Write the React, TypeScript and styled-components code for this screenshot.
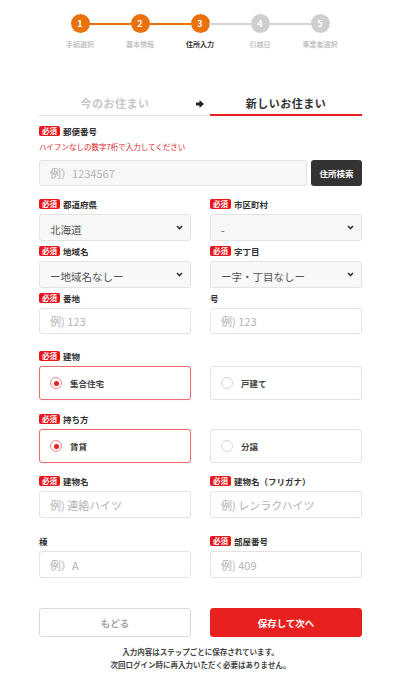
import React from 'react';
import styled, { createGlobalStyle } from 'styled-components';

const GlobalStyle = createGlobalStyle`
  * { box-sizing: border-box; }
  body {
    margin: 0;
    background: #fff;
    color: #333;
    font-family: "Noto Sans CJK JP", "Noto Sans", sans-serif;
  }
`;

const Page = styled.div`
  width: 400px;
  padding-bottom: 20px;
`;

const Stepper = styled.ol`
  display: flex;
  justify-content: center;
  list-style: none;
  margin: 0;
  padding: 14px 0 0;
`;

const Step = styled.li<{ $line?: 'on' | 'off' }>`
  position: relative;
  width: 60px;
  display: flex;
  flex-direction: column;
  align-items: center;

  &::after {
    content: '';
    display: ${(p) => (p.$line ? 'block' : 'none')};
    position: absolute;
    top: 9px;
    left: 39px;
    width: 42px;
    height: 2px;
    background: ${(p) => (p.$line === 'on' ? '#e8720c' : '#d4d4d4')};
  }
`;

const Circle = styled.span<{ $done: boolean }>`
  width: 19px;
  height: 19px;
  border-radius: 50%;
  background: ${(p) => (p.$done ? '#e8720c' : '#cfcfcf')};
  color: #fff;
  font-size: 9px;
  font-weight: 700;
  display: flex;
  align-items: center;
  justify-content: center;
`;

const StepLabel = styled.span<{ $current: boolean }>`
  margin-top: 6px;
  font-size: 7px;
  line-height: 10px;
  font-weight: 700;
  color: ${(p) => (p.$current ? '#333' : '#c4c4c4')};
  white-space: nowrap;
`;

const Content = styled.div`
  padding: 0 38px 0 39px;
`;

const Tabs = styled.div`
  margin-top: 43px;
  display: grid;
  grid-template-columns: 152px 19px 152px;
  border-bottom: 1px solid #e2e2e2;
`;

const Tab = styled.div<{ $active: boolean }>`
  height: 24px;
  display: flex;
  align-items: center;
  justify-content: center;
  font-size: 11px;
  font-weight: 700;
  letter-spacing: 0.5px;
  color: ${(p) => (p.$active ? '#333' : '#c8c8c8')};
  border-bottom: 2px solid ${(p) => (p.$active ? '#e8201f' : 'transparent')};
  margin-bottom: -1px;
`;

const TabArrow = styled.div`
  display: flex;
  align-items: center;
  justify-content: center;
  padding-right: 2px;
`;

const Section = styled.div<{ $mt: number }>`
  margin-top: ${(p) => p.$mt}px;
`;

const LabelRow = styled.div`
  height: 12px;
  display: flex;
  align-items: center;
  gap: 3px;
  font-size: 8.5px;
  font-weight: 700;
  color: #333;
`;

const Badge = styled.span`
  height: 10px;
  padding: 0 3px;
  border-radius: 2px;
  background: #e8141b;
  color: #fff;
  font-size: 7.5px;
  line-height: 10px;
  font-weight: 700;
`;

const Hint = styled.p`
  margin: 5px 0 0;
  font-size: 7.5px;
  line-height: 10px;
  color: #d9231f;
`;

const PostalRow = styled.div`
  margin-top: 8px;
  display: flex;
  gap: 4px;
`;

const TextInput = styled.input<{ $h?: number; $gray?: boolean }>`
  width: 100%;
  height: ${(p) => p.$h ?? 27}px;
  border: 1px solid #e3e3e3;
  border-radius: 3px;
  background: ${(p) => (p.$gray ? '#f7f7f7' : '#fff')};
  padding: 0 10px;
  font-family: inherit;
  font-size: 11px;
  color: #333;
  outline: none;

  &::placeholder {
    color: #b3b3b3;
  }
`;

const SearchButton = styled.button`
  flex: 0 0 51px;
  height: 26px;
  border: none;
  border-radius: 3px;
  background: #333;
  color: #fff;
  font-family: inherit;
  font-size: 8.5px;
  font-weight: 700;
`;

const Grid = styled.div<{ $mt: number }>`
  margin-top: ${(p) => p.$mt}px;
  display: grid;
  grid-template-columns: 152px 152px;
  column-gap: 19px;
`;

const Field = styled.div`
  display: flex;
  flex-direction: column;
  gap: 4px;
`;

const SelectWrap = styled.div`
  position: relative;
  height: 27px;
`;

const Select = styled.select`
  width: 100%;
  height: 100%;
  appearance: none;
  border: 1px solid #e3e3e3;
  border-radius: 3px;
  background: #f8f8f8;
  padding: 3px 10px 0;
  font-family: inherit;
  font-size: 10.5px;
  color: #555;
  outline: none;
`;

const Chevron = styled.svg`
  position: absolute;
  right: 8px;
  top: 11px;
  pointer-events: none;
`;

const RadioBox = styled.label<{ $checked: boolean }>`
  height: 34px;
  display: flex;
  align-items: center;
  gap: 8px;
  padding-left: 10px;
  border: 1px solid ${(p) => (p.$checked ? '#ec6b6b' : '#e3e3e3')};
  border-radius: 3px;
  box-shadow: ${(p) => (p.$checked ? '0 0 1px rgba(232, 32, 31, 0.4)' : 'none')};
  font-size: 8.5px;
  font-weight: 700;
  color: #444;
`;

const RadioDot = styled.span<{ $checked: boolean }>`
  width: 12px;
  height: 12px;
  border-radius: 50%;
  border: 1.5px solid ${(p) => (p.$checked ? '#f08a8a' : '#d6d6d6')};
  display: flex;
  align-items: center;
  justify-content: center;

  &::after {
    content: '';
    width: 5px;
    height: 5px;
    border-radius: 50%;
    background: ${(p) => (p.$checked ? '#e8201f' : 'transparent')};
  }
`;

const Actions = styled.div`
  margin-top: 30px;
  display: grid;
  grid-template-columns: 152px 152px;
  column-gap: 19px;
`;

const ActionButton = styled.button<{ $primary?: boolean }>`
  height: 29px;
  border-radius: 3px;
  border: 1px solid ${(p) => (p.$primary ? '#e8201f' : '#d9d9d9')};
  background: ${(p) => (p.$primary ? '#e8201f' : '#fff')};
  color: ${(p) => (p.$primary ? '#fff' : '#a5a5a5')};
  font-family: inherit;
  font-size: 9.5px;
  font-weight: 700;
`;

const Note = styled.p`
  margin: 8px 0 0;
  text-align: center;
  font-size: 7.5px;
  line-height: 13px;
  font-weight: 700;
  color: #444;
`;

const steps = ['手続選択', '基本情報', '住所入力', '引越日', '事業者選択'];
const current = 2;

const Label = ({ text, required = true }: { text: string; required?: boolean }) => (
  <LabelRow>
    {required && <Badge>必須</Badge>}
    <span>{text}</span>
  </LabelRow>
);

const Dropdown = ({ value }: { value: string }) => (
  <SelectWrap>
    <Select defaultValue={value}>
      <option>{value}</option>
    </Select>
    <Chevron width="7" height="5" viewBox="0 0 7 5">
      <path d="M1 1l2.5 2.5L6 1" fill="none" stroke="#333" strokeWidth="1.6" />
    </Chevron>
  </SelectWrap>
);

const Radio = ({ text, checked }: { text: string; checked: boolean }) => (
  <RadioBox $checked={checked}>
    <RadioDot $checked={checked} />
    {text}
  </RadioBox>
);

export default function App() {
  return (
    <Page>
      <GlobalStyle />
      <Stepper>
        {steps.map((s, i) => (
          <Step key={s} $line={i < steps.length - 1 ? (i < current ? 'on' : 'off') : undefined}>
            <Circle $done={i <= current}>{i + 1}</Circle>
            <StepLabel $current={i === current}>{s}</StepLabel>
          </Step>
        ))}
      </Stepper>

      <Content>
        <Tabs>
          <Tab $active={false}>今のお住まい</Tab>
          <TabArrow>
            <svg width="8" height="8" viewBox="0 0 8 8">
              <path d="M0 2.5h3.5V0L8 4 3.5 8V5.5H0z" fill="#222" />
            </svg>
          </TabArrow>
          <Tab $active>新しいお住まい</Tab>
        </Tabs>

        <Section $mt={9}>
          <Label text="郵便番号" />
          <Hint>ハイフンなしの数字7桁で入力してください</Hint>
          <PostalRow>
            <TextInput $h={26} $gray placeholder="例）1234567" />
            <SearchButton>住所検索</SearchButton>
          </PostalRow>
        </Section>

        <Grid $mt={12}>
          <Field>
            <Label text="都道府県" />
            <Dropdown value="北海道" />
          </Field>
          <Field>
            <Label text="市区町村" />
            <Dropdown value="-" />
          </Field>
        </Grid>

        <Grid $mt={4}>
          <Field>
            <Label text="地域名" />
            <Dropdown value="ー地域名なしー" />
          </Field>
          <Field>
            <Label text="字丁目" />
            <Dropdown value="ー字・丁目なしー" />
          </Field>
        </Grid>

        <Grid $mt={4}>
          <Field>
            <Label text="番地" />
            <TextInput $h={26} placeholder="例) 123" />
          </Field>
          <Field>
            <Label text="号" required={false} />
            <TextInput $h={26} placeholder="例) 123" />
          </Field>
        </Grid>

        <Grid $mt={16}>
          <Field>
            <Label text="建物" />
            <Radio text="集合住宅" checked />
          </Field>
          <Field>
            <LabelRow />
            <Radio text="戸建て" checked={false} />
          </Field>
        </Grid>

        <Grid $mt={13}>
          <Field>
            <Label text="持ち方" />
            <Radio text="賃貸" checked />
          </Field>
          <Field>
            <LabelRow />
            <Radio text="分譲" checked={false} />
          </Field>
        </Grid>

        <Grid $mt={12}>
          <Field>
            <Label text="建物名" />
            <TextInput placeholder="例) 連絡ハイツ" />
          </Field>
          <Field>
            <Label text="建物名（フリガナ）" />
            <TextInput placeholder="例) レンラクハイツ" />
          </Field>
        </Grid>

        <Grid $mt={17}>
          <Field>
            <Label text="棟" required={false} />
            <TextInput placeholder="例）A" />
          </Field>
          <Field>
            <Label text="部屋番号" />
            <TextInput placeholder="例) 409" />
          </Field>
        </Grid>

        <Actions>
          <ActionButton>もどる</ActionButton>
          <ActionButton $primary>保存して次へ</ActionButton>
        </Actions>

        <Note>
          入力内容はステップごとに保存されています。
          <br />
          次回ログイン時に再入力いただく必要はありません。
        </Note>
      </Content>
    </Page>
  );
}
